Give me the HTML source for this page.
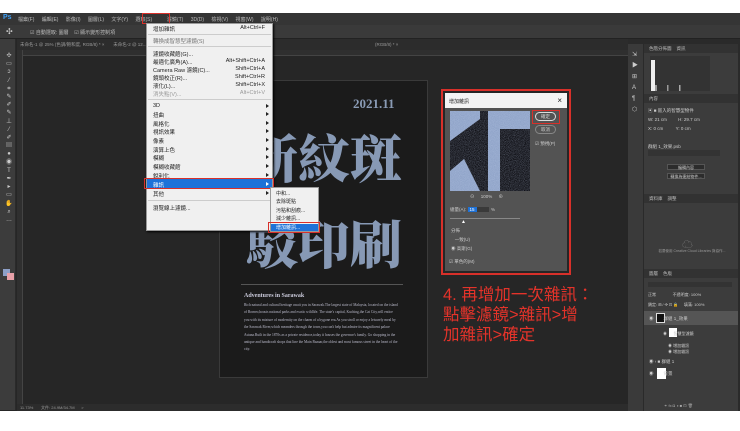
<!DOCTYPE html>
<html><head><meta charset="utf-8"><style>
*{margin:0;padding:0;box-sizing:border-box}
body{width:740px;height:431px;background:#fff;position:relative;overflow:hidden;font-family:"Liberation Sans","Noto Sans CJK TC",sans-serif;font-size:5px;color:#ccc}
.a{position:absolute}
.mi{position:absolute;left:7px;font-size:5.5px;color:#222;white-space:nowrap}
.sc{position:absolute;right:8px;font-size:5.5px;color:#222}
.ar{position:absolute;right:4px;width:0;height:0;border-left:3px solid #222;border-top:2px solid transparent;border-bottom:2px solid transparent}
.ph{position:absolute;left:0;right:0;height:9px;background:#323232;color:#bbb;font-size:4.5px;padding:2px 5px}
.big{position:absolute;font-family:"Noto Serif CJK SC","Liberation Serif",serif;font-weight:900;color:#8799b5;font-size:52px;line-height:1}
</style></head><body>
<!-- main app frame -->
<div class="a" style="left:0;top:13px;width:740px;height:398px;background:#262626"></div>
<!-- menubar -->
<div class="a" style="left:0;top:13px;width:740px;height:12px;background:#353535"></div>
<div class="a" style="left:3px;top:14px;font-size:7px;color:#3fa0f5;font-weight:bold">Ps</div>
<div class="a" style="left:18px;top:16px;font-size:5px;color:#bbb;word-spacing:6px;white-space:nowrap">檔案(F) 編輯(E) 影像(I) 圖層(L) 文字(Y) 選取(S) &nbsp;濾鏡(T) 3D(D) 檢視(V) 視窗(W) 說明(H)</div>
<div class="a" style="left:142px;top:13px;width:28px;height:11px;border:1.5px solid #d8302a"></div>
<!-- options bar -->
<div class="a" style="left:0;top:25px;width:740px;height:14px;background:#3a3a3a;border-bottom:1px solid #222"></div>
<div class="a" style="left:6px;top:27px;font-size:8px;color:#ccc">✣</div>
<div class="a" style="left:30px;top:29px;font-size:5px;color:#bbb;white-space:nowrap">☑ 自動選取: 圖層 &nbsp;&nbsp; ☑ 顯示變形控制項</div>
<!-- tabs -->
<div class="a" style="left:17px;top:39px;width:611px;height:11px;background:#2c2c2c"></div>
<div class="a" style="left:20px;top:42px;font-size:4.5px;color:#999;white-space:nowrap">未命名-1 @ 25% (色調/飽和度, RGB/8) * ×  &nbsp;&nbsp;&nbsp;&nbsp;&nbsp; 未命名-2 @ 12...</div>
<div class="a" style="left:375px;top:42px;font-size:4.5px;color:#999">(RGB/8) * ×</div>
<!-- left toolbar -->
<div class="a" style="left:0;top:39px;width:16px;height:371px;background:#3c3c3c;border-right:1px solid #2a2a2a"></div>
<div class="a" style="left:4px;top:52px;font-size:6px;line-height:8.2px;color:#ccc;width:10px;text-align:center">✣<br>▭<br>ↄ<br>⁄<br>⌗<br>✎<br>✐<br>✎<br>⊥<br>⁄<br>✐<br>▤<br>●<br>◉<br>T<br>✒<br>▸<br>▭<br>✋<br>⌕<br>…</div>
<div class="a" style="left:3px;top:269px;width:7px;height:7px;background:#8ea0c8"></div>
<div class="a" style="left:7px;top:273px;width:7px;height:7px;background:#e8a0a8"></div>
<!-- rulers -->
<div class="a" style="left:17px;top:50px;width:611px;height:6px;background:#2f2f2f;border-bottom:1px solid #444"></div>
<div class="a" style="left:17px;top:50px;width:6px;height:355px;background:#2f2f2f;border-right:1px solid #444"></div>
<!-- status -->
<div class="a" style="left:17px;top:404px;width:611px;height:7px;background:#2c2c2c;font-size:4px;color:#999;padding:1px 3px;white-space:nowrap">11.73% &nbsp;&nbsp;&nbsp;&nbsp;&nbsp; 文件: 24.9M/34.7M &nbsp;&nbsp;&nbsp;&nbsp; &gt;</div>
<!-- document -->
<div class="a" style="left:219px;top:80px;width:209px;height:298px;background:#1b1b1b;border:1px solid #3a3a3a"></div>
<div class="a" style="left:353px;top:96px;font-family:'Liberation Serif',serif;font-weight:bold;font-size:13px;color:#8a9bb5">2021.11</div>
<div class="big" style="left:246px;top:130px;letter-spacing:0px">新紋斑</div>
<div class="big" style="left:246px;top:216px">駁印刷</div>
<div class="a" style="left:241px;top:284px;width:162px;height:1px;background:#555"></div>
<div class="a" style="left:244px;top:293px;font-family:'Liberation Serif',serif;font-weight:bold;font-size:6px;color:#ccd">Adventures in Sarawak</div>
<div class="a" style="left:244px;top:302px;width:155px;font-family:'Liberation Serif',serif;font-size:3.6px;line-height:7.4px;color:#bbc">Rich natural and cultural heritage await you in Sarawak.The largest state of Malaysia, located on the island of Borneo,boasts national parks and exotic wildlife. The state's capital, Kuching,the Cat City,will entice you with its mixture of modernity on the charm of a bygone era.As you stroll or enjoy a leisurely meal by the Sarawak River,which meanders through the town,you can't help but admire its magnificent palace Astana.Built in the 1870s as a private residence,today it houses the governor's family. Go shopping in the antique and handicraft shops that line the Main Bazaar,the oldest and most famous street in the heart of the city.</div>
<!-- filter menu -->
<div class="a" style="left:146px;top:23px;width:127px;height:208px;background:#f0f0f0;border:1px solid #999;box-shadow:1px 1px 2px #000"></div>
<div class="a" style="left:146px;top:23px;width:127px;height:208px">
<div class="mi" style="top:2px">增加雜訊</div><div class="sc" style="top:2px">Alt+Ctrl+F</div>
<div class="a" style="left:2px;right:2px;top:11px;height:1px;background:#ccc"></div>
<div class="mi" style="top:14px;color:#777">轉換成智慧型濾鏡(S)</div>
<div class="a" style="left:2px;right:2px;top:23px;height:1px;background:#ccc"></div>
<div class="mi" style="top:27px">濾鏡收藏館(G)...</div>
<div class="mi" style="top:35px">最適化廣角(A)...</div><div class="sc" style="top:35px">Alt+Shift+Ctrl+A</div>
<div class="mi" style="top:43px">Camera Raw 濾鏡(C)...</div><div class="sc" style="top:43px">Shift+Ctrl+A</div>
<div class="mi" style="top:51px">鏡頭校正(R)...</div><div class="sc" style="top:51px">Shift+Ctrl+R</div>
<div class="mi" style="top:59px">液化(L)...</div><div class="sc" style="top:59px">Shift+Ctrl+X</div>
<div class="mi" style="top:67px;color:#999">消失點(V)...</div><div class="sc" style="top:67px;color:#999">Alt+Ctrl+V</div>
<div class="a" style="left:2px;right:2px;top:76px;height:1px;background:#ccc"></div>
<div class="mi" style="top:80px">3D</div><div class="ar" style="top:81px"></div>
<div class="mi" style="top:88px">扭曲</div><div class="ar" style="top:89px"></div>
<div class="mi" style="top:97px">風格化</div><div class="ar" style="top:98px"></div>
<div class="mi" style="top:105px">視訊效果</div><div class="ar" style="top:106px"></div>
<div class="mi" style="top:114px">像素</div><div class="ar" style="top:115px"></div>
<div class="mi" style="top:123px">演算上色</div><div class="ar" style="top:124px"></div>
<div class="mi" style="top:131px">模糊</div><div class="ar" style="top:132px"></div>
<div class="mi" style="top:140px">模糊收藏館</div><div class="ar" style="top:141px"></div>
<div class="mi" style="top:149px">銳利化</div><div class="ar" style="top:150px"></div>
<div class="a" style="left:1px;right:1px;top:156px;height:9px;background:#1e72d8"></div>
<div class="mi" style="top:158px;color:#fff">雜訊</div><div class="ar" style="top:159px;border-left-color:#fff"></div>
<div class="a" style="left:-2px;right:-1px;top:155px;height:11px;border:1.5px solid #d8302a"></div>
<div class="mi" style="top:167px">其他</div><div class="ar" style="top:168px"></div>
<div class="a" style="left:2px;right:2px;top:177px;height:1px;background:#ccc"></div>
<div class="mi" style="top:181px">瀏覽線上濾鏡...</div>
</div>
<!-- submenu -->
<div class="a" style="left:270px;top:187px;width:49px;height:45px;background:#f0f0f0;border:1px solid #999"></div>
<div class="a" style="left:276px;top:190px;font-size:5px;line-height:8.3px;color:#222;white-space:nowrap">中和...<br>去除斑點<br>污點和刮痕...<br>減少雜訊...</div>
<div class="a" style="left:271px;top:224px;width:47px;height:7px;background:#1e72d8;color:#fff;font-size:5px;padding-left:5px">增加雜訊...</div>
<div class="a" style="left:268px;top:222px;width:52px;height:11px;border:1.5px solid #d8302a"></div>
<!-- dialog -->
<div class="a" style="left:441px;top:89px;width:130px;height:186px;border:2px solid #d8302a"></div>
<div class="a" style="left:445px;top:93px;width:122px;height:178px;background:#535353"></div>
<div class="a" style="left:445px;top:93px;width:122px;height:15px;background:#f4f4f4;color:#222;font-size:5px;padding:5px 4px">增加雜訊<span style="position:absolute;right:5px;top:3px;font-size:8px">×</span></div>
<svg class="a" style="left:450px;top:111px" width="80" height="80" viewBox="0 0 80 80">
<defs><filter id="n"><feTurbulence type="fractalNoise" baseFrequency="1.8" numOctaves="1"/><feColorMatrix values="0 0 0 0 0.55 0 0 0 0 0.65 0 0 0 0 0.85 0 0 0 2.2 -0.8"/></filter></defs>
<rect width="80" height="80" fill="#0d0d12"/>
<g fill="#8fa3c8"><polygon points="0,0 30,0 30,8 0,30"/><polygon points="38,0 80,0 80,18 50,18 50,80 38,80"/><polygon points="0,60 14,48 30,80 0,80"/></g>
<rect width="80" height="80" filter="url(#n)" opacity=".45"/>
</svg>
<div class="a" style="left:470px;top:194px;font-size:4.5px;color:#ccc;white-space:nowrap">⊖ &nbsp;&nbsp;&nbsp; 100% &nbsp;&nbsp;&nbsp; ⊕</div>
<div class="a" style="left:535px;top:112px;width:21px;height:9px;border:1px solid #ddd;border-radius:5px;font-size:4.5px;color:#ddd;text-align:center;line-height:7px">確定</div>
<div class="a" style="left:532px;top:110px;width:28px;height:14px;border:1.5px solid #d8302a"></div>
<div class="a" style="left:535px;top:125px;width:21px;height:9px;border:1px solid #888;border-radius:5px;font-size:4.5px;color:#ccc;text-align:center;line-height:7px">取消</div>
<div class="a" style="left:535px;top:141px;font-size:4.5px;color:#ccc">☑ 預視(P)</div>
<div class="a" style="left:450px;top:207px;font-size:4.5px;color:#ccc">總量(A): <span style="background:#1e72d8;color:#fff;padding:0 2px">15</span><span style="display:inline-block;width:12px;height:5px;background:#3a3a3a;vertical-align:middle"></span> &nbsp;%</div>
<div class="a" style="left:450px;top:218px;width:70px;height:1px;background:#888"></div>
<div class="a" style="left:461px;top:219px;font-size:5px;color:#fff">▲</div>
<div class="a" style="left:451px;top:226px;font-size:4.5px;color:#ccc;line-height:9px">分佈<br>&nbsp;&nbsp;&nbsp;一致(U)<br>◉ 高斯(G)</div>
<div class="a" style="left:449px;top:259px;font-size:4.5px;color:#ccc">☑ 單色的(M)</div>
<!-- red caption -->
<div class="a" style="left:443px;top:285px;font-size:16.5px;line-height:20px;color:#e4332a;font-family:'Liberation Sans','Noto Sans CJK TC',sans-serif;white-space:nowrap">4. 再增加一次雜訊：<br>點擊濾鏡&gt;雜訊&gt;增<br>加雜訊&gt;確定</div>
<!-- right area -->
<div class="a" style="left:628px;top:39px;width:112px;height:372px;background:#2a2a2a"></div>
<div class="a" style="left:628px;top:44px;width:15px;height:367px;background:#3a3a3a"></div>
<div class="a" style="left:632px;top:50px;font-size:6px;line-height:11px;color:#ccc">⇲<br>▶<br>⊞<br>A<br>¶<br>⬡</div>
<div class="a" style="left:644px;top:44px;width:94px;height:367px;background:#3c3c3c"></div>
<div class="ph" style="left:644px;right:2px;top:44px">色階分佈圖 &nbsp;&nbsp; 資訊</div>
<div class="a" style="left:650px;top:56px;width:60px;height:35px;background:#333"></div>
<div class="a" style="left:651px;top:60px;width:4px;height:31px;background:#eee"></div>
<div class="a" style="left:655px;top:85px;width:40px;height:6px;background:linear-gradient(90deg,#999 0 5%,transparent 5% 30%,#999 30% 34%,transparent 34% 60%,#aaa 60% 64%,transparent 64%)"></div>
<div class="ph" style="left:644px;right:2px;top:94px">內容</div>
<div class="a" style="left:648px;top:106px;font-size:4.5px;color:#ccc;line-height:9px;white-space:nowrap">▣ ■ 嵌入的智慧型物件<br>W: 21 cm &nbsp;&nbsp;&nbsp;&nbsp;&nbsp;&nbsp;&nbsp; H: 29.7 cm<br>X: 0 cm &nbsp;&nbsp;&nbsp;&nbsp;&nbsp;&nbsp;&nbsp;&nbsp; Y: 0 cm<br><br>群組 1_效果.psb</div>
<div class="a" style="left:648px;top:150px;width:72px;height:6px;background:#333"></div>
<div class="a" style="left:667px;top:164px;width:38px;height:6px;background:#2c2c2c;border:1px solid #555;font-size:4px;color:#ccc;text-align:center">編輯內容</div>
<div class="a" style="left:667px;top:173px;width:38px;height:6px;background:#2c2c2c;border:1px solid #555;font-size:4px;color:#ccc;text-align:center">轉換為連結物件...</div>
<div class="ph" style="left:644px;right:2px;top:194px">資料庫 &nbsp;&nbsp; 調整</div>
<div class="a" style="left:682px;top:236px;font-size:11px;color:#777">☁</div>
<div class="a" style="left:652px;top:249px;font-size:3.5px;color:#999;width:80px;text-align:center">若要使用 Creative Cloud Libraries 與協作...</div>
<div class="ph" style="left:644px;right:2px;top:269px">圖層 &nbsp;&nbsp; 色版</div>
<div class="a" style="left:648px;top:282px;width:84px;height:5px;background:#333"></div>
<div class="a" style="left:648px;top:292px;font-size:4px;color:#ccc;white-space:nowrap">正常 &nbsp;&nbsp;&nbsp;&nbsp;&nbsp;&nbsp;&nbsp;&nbsp;&nbsp;&nbsp;&nbsp;&nbsp;&nbsp; 不透明度: 100%</div>
<div class="a" style="left:648px;top:302px;font-size:4px;color:#ccc;white-space:nowrap">鎖定: ⊞ ⁄ ✣ ⊡ 🔒 &nbsp;&nbsp;&nbsp; 填滿: 100%</div>
<div class="a" style="left:644px;top:311px;width:94px;height:14px;background:#555"></div>
<div class="a" style="left:656px;top:313px;width:9px;height:10px;background:#111;border:1px solid #ddd"></div>
<div class="a" style="left:649px;top:316px;font-size:4.5px;color:#ccc;white-space:nowrap">◉ &nbsp;&nbsp;&nbsp;&nbsp;&nbsp;&nbsp; 群組 1_效果</div>
<div class="a" style="left:669px;top:328px;width:8px;height:9px;background:#fff"></div>
<div class="a" style="left:663px;top:331px;font-size:4px;color:#ccc;white-space:nowrap">◉ &nbsp;&nbsp;&nbsp;&nbsp; 智慧型濾鏡</div>
<div class="a" style="left:668px;top:343px;font-size:4px;color:#ccc;line-height:6px;white-space:nowrap">◉ 增加雜訊<br>◉ 增加雜訊</div>
<div class="a" style="left:649px;top:359px;font-size:4.5px;color:#ccc;white-space:nowrap">◉ › ■ 群組 1</div>
<div class="a" style="left:657px;top:368px;width:9px;height:11px;background:#fff"></div>
<div class="a" style="left:649px;top:371px;font-size:4.5px;color:#ccc;white-space:nowrap">◉ &nbsp;&nbsp;&nbsp;&nbsp;&nbsp;&nbsp; 背景</div>
<div class="a" style="left:664px;top:403px;font-size:4px;color:#aaa;white-space:nowrap">⚭ fx ◘ ◑ ■ ⊡ 🗑</div>
</body></html>
